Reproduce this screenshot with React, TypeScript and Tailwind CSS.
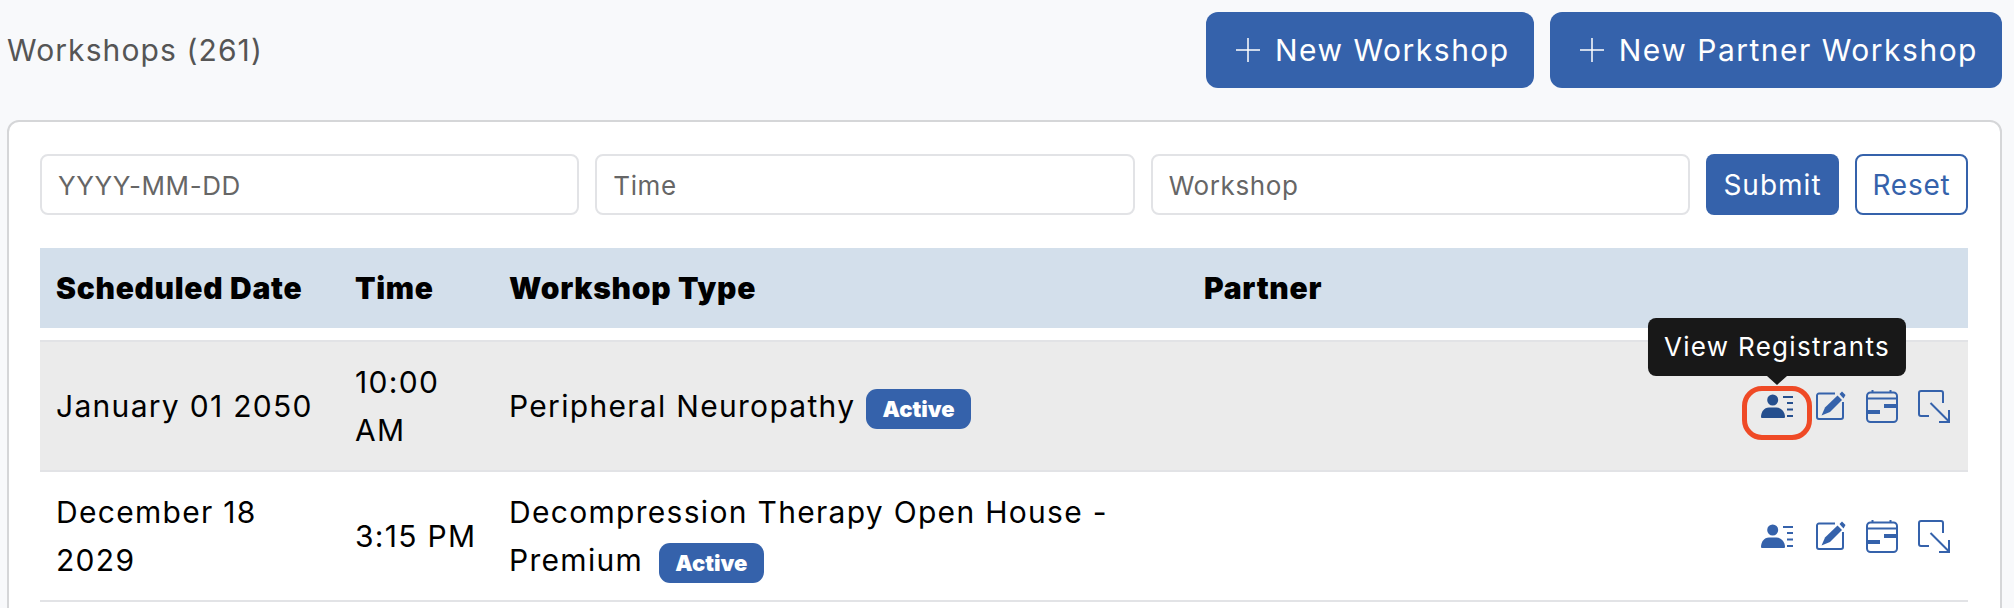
import React from 'react';

const font = "font-['Inter','Liberation_Sans',sans-serif]";

function PersonIcon({ className }: { className: string }) {
  return (
    <svg viewBox="0 0 32 24" className={className} fill="currentColor">
      <circle cx="11.700" cy="6" r="5.500" />
      <path d="M0 23c0-5 3-9.500 8-9.500h7.500c5 0 8.500 4.500 8.500 9.500a1 1 0 0 1-1 1H1a1 1 0 0 1-1-1z" />
      <path d="M22 2h10v2H22zM26 8h6v2h-6zM26 14.500h6v2h-6zM26 21h6v2h-6z" />
    </svg>
  );
}

function EditIcon() {
  return (
    <svg viewBox="0 0 30 30" className="w-[30px] h-[30px] text-[#3562ab]" fill="none" stroke="currentColor" strokeWidth="2">
      <path d="M19 2.500H3a2 2 0 0 0-2 2V26a2 2 0 0 0 2 2h22a2 2 0 0 0 2-2V11" />
      <path d="M5.500 24.500L9 16.500 21.500 4.500l4.500 4.500L14 21z" fill="currentColor" stroke="none" />
      <path d="M23.500 3L26 0.500 29.500 4 27.500 7.500z" fill="currentColor" stroke="none" />
    </svg>
  );
}

function CalendarIcon() {
  return (
    <svg viewBox="0 0 32 33" className="w-8 h-[33px] text-[#3562ab]" fill="none" stroke="currentColor" strokeWidth="2">
      <rect x="1" y="2.500" width="30" height="29.500" rx="3.500" />
      <path d="M1 8.500h30M6.500 0v2.500M24.500 0v2.500" />
      <path d="M18 14h14v4H18zM1 20h13v4H1z" fill="currentColor" stroke="none" />
    </svg>
  );
}

function ExportIcon() {
  return (
    <svg viewBox="0 0 32 33" className="w-8 h-[33px] text-[#3562ab]" fill="none" stroke="currentColor" strokeWidth="2">
      <path d="M25 13V3a2 2 0 0 0-2-2H3a2 2 0 0 0-2 2v21a2 2 0 0 0 2 2h8" />
      <path d="M12.500 13L31 31.500M31 20v12H21" />
    </svg>
  );
}

function PlusIcon() {
  return (
    <svg viewBox="0 0 26 26" className="w-[26px] h-[26px]" fill="none" stroke="currentColor" strokeWidth="1.500">
      <path d="M13 1v24M1 13h24" />
    </svg>
  );
}

function Badge({ className }: { className: string }) {
  return (
    <span className={`inline-flex items-center justify-center w-[105px] h-10 rounded-[11px] bg-[#3562ab] text-white text-[22px] tracking-normal font-black align-middle ${className}`}>
      Active
    </span>
  );
}

function Actions({ highlighted }: { highlighted?: boolean }) {
  return (
    <div className="flex items-center justify-end pr-[18px]">
      <div className="relative flex justify-center w-[70px] h-6 mr-1">
        <PersonIcon className={`w-8 h-6 ${highlighted ? 'text-[#254f8e]' : 'text-[#3562ab]'}`} />
        {highlighted && (
          <>
            <div className="absolute -top-2 left-0 w-[70px] h-[54px] border-[5px] border-[#ef4a26] rounded-[20px]" />
            <div className="absolute left-1/2 -translate-x-1/2 bottom-full mb-[18px] whitespace-nowrap rounded-lg bg-[#181818] text-white text-[26px] tracking-[1.3px] leading-[58px] px-4">
              View Registrants
              <div className="absolute left-1/2 -translate-x-1/2 top-full w-0 h-0 border-x-[10px] border-x-transparent border-t-[9px] border-t-[#181818]" />
            </div>
          </>
        )}
      </div>
      <div className="flex items-center gap-5">
        <EditIcon />
        <CalendarIcon />
        <ExportIcon />
      </div>
    </div>
  );
}

const gridCols = 'grid grid-cols-[299px_154px_695px_1fr] items-center';

export default function App() {
  return (
    <div className={`h-[608px] overflow-hidden bg-[#f8f9fb] pl-[7px] pr-[12px] ${font}`}>
      <div className="flex items-center justify-between h-[100px]">
        <h1 className="text-[30px] tracking-[1.1px] text-[#555555] font-normal">Workshops (261)</h1>
        <div className="flex gap-4">
          <button className="flex items-center gap-[14px] h-[76px] pl-[29px] pr-[24px] rounded-xl bg-[#3562ab] text-white text-[30px] tracking-[1.5px]">
            <PlusIcon /> New Workshop
          </button>
          <button className="flex items-center gap-[14px] h-[76px] pl-[29px] pr-[24px] rounded-xl bg-[#3562ab] text-white text-[30px] tracking-[1.5px]">
            <PlusIcon /> New Partner Workshop
          </button>
        </div>
      </div>
      <div className="mt-5 bg-white border-2 border-[#d5d6d8] rounded-xl pt-[32px] pl-[31px] pr-[32px] h-[600px]">
        <div className="flex items-center gap-4">
          <input placeholder="YYYY-MM-DD" className="flex-1 min-w-0 h-[61px] px-4 pt-0.5 border-2 border-[#e2e3e6] rounded-lg text-[26px] tracking-[0.6px] placeholder:text-[#666666]" />
          <input placeholder="Time" className="flex-1 min-w-0 h-[61px] px-4 pt-0.5 border-2 border-[#e2e3e6] rounded-lg text-[26px] tracking-[0.6px] placeholder:text-[#666666]" />
          <input placeholder="Workshop" className="flex-1 min-w-0 h-[61px] px-4 pt-0.5 border-2 border-[#e2e3e6] rounded-lg text-[26px] tracking-[0.6px] placeholder:text-[#666666]" />
          <button className="w-[133px] h-[61px] rounded-lg bg-[#3562ab] text-white text-[28px] tracking-[1px]">Submit</button>
          <button className="w-[113px] h-[61px] rounded-lg bg-white border-2 border-[#3562ab] text-[#3562ab] text-[28px] tracking-[0.8px]">Reset</button>
        </div>
        <div className={`${gridCols} h-[80px] mt-[33px] bg-[#d3dfeb] text-[30px] tracking-[0.7px] font-black text-black`}>
          <div className="pl-4">Scheduled Date</div>
          <div className="pl-4">Time</div>
          <div className="pl-4">Workshop Type</div>
          <div className="pl-4">Partner</div>
        </div>
        <div className={`${gridCols} h-[132px] mt-3 bg-[#ebebeb] border-y-2 border-[#e2e3e6] text-[30px] tracking-[1.3px] leading-[48px] text-black`}>
          <div className="pl-4 pr-4">January 01 2050</div>
          <div className="pl-4 pr-4">10:00 AM</div>
          <div className="pl-4 pr-16">Peripheral Neuropathy <Badge className="ml-px" /></div>
          <Actions highlighted />
        </div>
        <div className={`${gridCols} h-[130px] border-b-2 border-[#e2e3e6] text-[30px] tracking-[1.3px] leading-[48px] text-black`}>
          <div className="pl-4 pr-4">December 18 2029</div>
          <div className="pl-4 pr-4">3:15 PM</div>
          <div className="pl-4 pr-16">Decompression Therapy Open House - Premium <Badge className="ml-1.5" /></div>
          <Actions />
        </div>
      </div>
    </div>
  );
}
